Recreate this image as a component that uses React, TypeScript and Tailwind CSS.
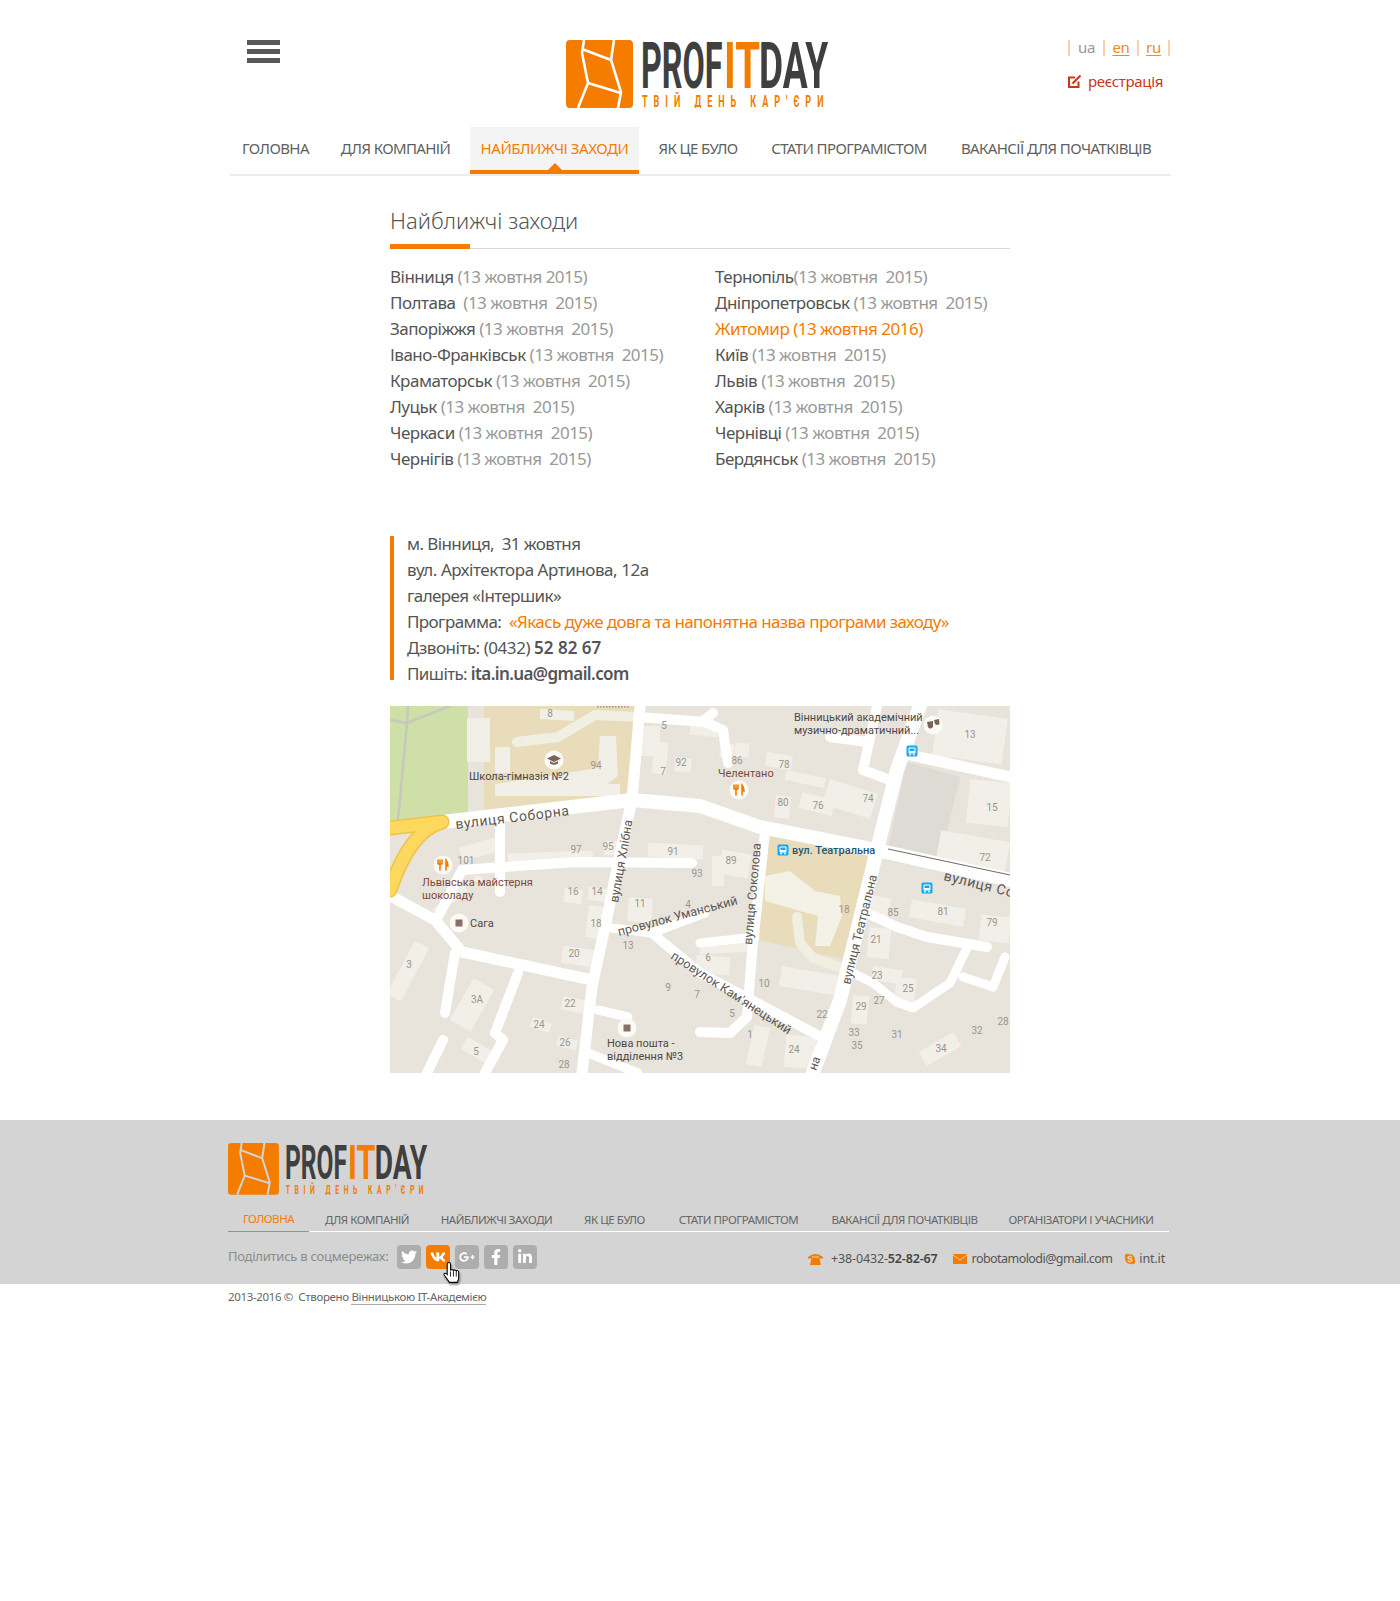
import { FaTwitter, FaVk, FaGooglePlusG, FaFacebookF, FaLinkedinIn, FaSkype } from "react-icons/fa";

const navItems = [
  { label: "ГОЛОВНА", w: "w-[91px]" },
  { label: "ДЛЯ КОМПАНІЙ", w: "w-[149px]" },
  { label: "НАЙБЛИЖЧІ ЗАХОДИ", w: "w-[169px] tracking-[-0.45px]", active: true },
  { label: "ЯК ЦЕ БУЛО", w: "w-[118px]" },
  { label: "СТАТИ ПРОГРАМІСТОМ", w: "w-[184px] tracking-[-0.3px]" },
  { label: "ВАКАНСІЇ ДЛЯ ПОЧАТКІВЦІВ", w: "w-[230px]" },
];

const footerNav = [
  { label: "ГОЛОВНА", w: "w-[81px]", active: true },
  { label: "ДЛЯ КОМПАНІЙ", w: "w-[116px]" },
  { label: "НАЙБЛИЖЧІ ЗАХОДИ", w: "w-[143px]" },
  { label: "ЯК ЦЕ БУЛО", w: "w-[93px]" },
  { label: "СТАТИ ПРОГРАМІСТОМ", w: "w-[155px]" },
  { label: "ВАКАНСІЇ ДЛЯ ПОЧАТКІВЦІВ", w: "w-[177px]" },
  { label: "ОРГАНІЗАТОРИ І УЧАСНИКИ", w: "w-[176px]" },
];

const D = "(13 жовтня\u00a0\u00a02015)";

const leftCities: [string, string][] = [
  ["Вінниця", "(13 жовтня 2015)"],
  ["Полтава", "\u00a0" + D],
  ["Запоріжжя", D],
  ["Івано-Франківськ", D],
  ["Краматорськ", D],
  ["Луцьк", D],
  ["Черкаси", D],
  ["Чернігів", D],
];

const rightCities: [string, string][] = [
  ["Тернопіль", D],
  ["Дніпропетровськ", D],
  ["Житомир", "(13 жовтня 2016)"],
  ["Київ", D],
  ["Львів", D],
  ["Харків", D],
  ["Чернівці", D],
  ["Бердянськ", D],
];

function Logo({ scale, line }: { scale: number; line: string }) {
  return (
    <svg width={265 * scale} height={68 * scale} viewBox="0 0 265 68" className="block">
      <rect x="0" y="0" width="67" height="68" rx="4" fill="#f47d00" />
      <g fill="none" stroke={line} strokeWidth="2.6">
        <path d="M18 0 L16 13 L22 43 L12 68" />
        <path d="M16 9 L45 20" />
        <path d="M48 0 L45 20 L55 52 L52 68" />
        <path d="M22 43 L55 53" />
      </g>
      <g fontFamily="Roboto, sans-serif" fontWeight="700" fontSize="64">
        <text transform="translate(75 48) scale(0.5 1)" fill="#3f3f3f" textLength="163" lengthAdjust="spacingAndGlyphs">
          PROF
        </text>
        <text transform="translate(158 48) scale(0.6 1)" fill="#f47d00" textLength="60" lengthAdjust="spacingAndGlyphs">
          IT
        </text>
        <text transform="translate(193 48) scale(0.54 1)" fill="#3f3f3f" textLength="128" lengthAdjust="spacingAndGlyphs">
          DAY
        </text>
      </g>
      <text
        transform="translate(76 67) scale(0.55 1)"
        fill="#f47d00"
        fontFamily="Roboto, sans-serif"
        fontWeight="700"
        fontSize="16.5"
        textLength="330"
        lengthAdjust="spacing"
      >
        ТВІЙ ДЕНЬ КАР'ЄРИ
      </text>
    </svg>
  );
}

function Road({ d, w = 10, c = "#ffffff" }: { d: string; w?: number; c?: string }) {
  return <path d={d} fill="none" stroke={c} strokeWidth={w + 1} strokeLinecap="round" strokeLinejoin="round" />;
}

function Poi({ x, y, kind }: { x: number; y: number; kind: "food" | "square" | "school" | "theatre" }) {
  return (
    <g transform={`translate(${x} ${y})`}>
      <circle r="9.5" fill="#fbfaf7" />
      {kind === "food" && (
        <g stroke="#f47d00" strokeWidth="1.6" fill="none" strokeLinecap="round">
          <path d="M-3 -5 V5 M-5 -5 V-1.5 Q-3 0 -1 -1.5 V-5" />
          <path d="M3 5 V-5 Q5 -3 5 1 L3 1" fill="#f47d00" />
        </g>
      )}
      {kind === "square" && <rect x="-3.5" y="-3.5" width="7" height="7" fill="#8a6f67" />}
      {kind === "school" && (
        <g fill="#7d6259">
          <path d="M-7 -1.5 L0 -5 L7 -1.5 L0 2 Z" />
          <path d="M-4 1 L0 3 L4 1 V3.5 Q0 6 -4 3.5 Z" />
        </g>
      )}
      {kind === "theatre" && (
        <g fill="#7d6259">
          <path d="M-6 -3 L0 -4 L0 2 Q-3 5 -5 2 Z" />
          <path d="M1 -5 L6 -6 L6.5 -1 Q4 1 2 -1 Z" />
        </g>
      )}
    </g>
  );
}

function BusStop({ x, y }: { x: number; y: number }) {
  return (
    <g transform={`translate(${x} ${y})`}>
      <rect x="-5.5" y="-5.5" width="11" height="11" rx="1.5" fill="#17a9ef" />
      <rect x="-3.5" y="-3.5" width="7" height="6" rx="1" fill="#fff" />
      <rect x="-2.5" y="-2.5" width="5" height="2.5" fill="#17a9ef" />
      <circle cx="-2" cy="3.5" r="0.9" fill="#fff" />
      <circle cx="2" cy="3.5" r="0.9" fill="#fff" />
    </g>
  );
}

const houseNumbers: [string, number, number][] = [
  ["8", 160, 11], ["5", 274, 23], ["92", 291, 60], ["7", 273, 69], ["94", 206, 63], ["97", 186, 147],
  ["95", 218, 144], ["91", 283, 149], ["93", 307, 171], ["101", 76, 158], ["16", 183, 189], ["14", 207, 189],
  ["11", 250, 201], ["4", 298, 202], ["18", 206, 221], ["13", 238, 243], ["20", 184, 251], ["9", 278, 285],
  ["7", 307, 292], ["3", 19, 262], ["3А", 87, 297], ["22", 180, 301], ["24", 149, 322], ["26", 175, 340],
  ["5", 86, 349], ["28", 174, 362], ["86", 347, 58], ["78", 394, 62], ["80", 393, 100], ["76", 428, 103],
  ["74", 478, 96], ["13", 580, 32], ["15", 602, 105], ["72", 595, 155], ["89", 341, 158], ["18", 454, 207],
  ["85", 503, 210], ["81", 553, 209], ["79", 602, 220], ["21", 486, 237], ["23", 487, 273], ["25", 518, 286],
  ["27", 489, 298], ["29", 471, 304], ["22", 432, 312], ["33", 464, 330], ["35", 467, 343], ["31", 507, 332],
  ["34", 551, 346], ["32", 587, 328], ["28", 613, 319], ["6", 318, 255], ["10", 374, 281], ["5", 342, 311],
  ["1", 360, 332], ["24", 404, 347],
];

const lightBlocks: [number, number, number, number, number][] = [
  [77, 12, 23, 44, 0], [105, 41, 15, 26, 0], [105, 78, 125, 12, 0], [118, 146, 85, 14, -2], [70, 136, 40, 14, -15],
  [214, 135, 20, 14, 0], [258, 138, 55, 14, 3], [174, 183, 18, 14, 8], [198, 182, 20, 13, 8], [238, 192, 24, 24, 5],
  [197, 200, 16, 32, 8], [172, 242, 32, 17, 8], [10, 235, 16, 60, 28], [70, 275, 24, 48, 30], [172, 292, 24, 14, 12],
  [141, 314, 20, 10, 20], [167, 332, 20, 10, 14], [72, 338, 32, 14, 30], [263, 36, 14, 32, 6], [285, 52, 16, 14, 6],
  [330, 38, 14, 14, 5], [345, 37, 14, 14, 5], [376, 48, 26, 14, 10], [395, 68, 40, 10, 12], [385, 90, 15, 22, 6],
  [410, 90, 34, 16, 14], [435, 80, 50, 26, 18], [545, 8, 70, 46, 8], [578, 75, 42, 44, 6], [548, 130, 70, 30, 10],
  [330, 146, 30, 24, 10], [390, 265, 60, 20, 10], [470, 190, 30, 20, 10], [520, 198, 55, 18, 10], [590, 210, 30, 26, 6],
  [478, 222, 22, 30, 5], [482, 262, 30, 14, 10], [505, 272, 20, 30, 6], [462, 290, 16, 28, 5], [530, 335, 40, 16, -30],
  [360, 320, 16, 40, 12], [395, 330, 30, 32, 5], [322, 150, 12, 30, 0], [310, 235, 50, 12, -3], [306, 250, 34, 18, 5],
  [250, 20, 20, 30, 0], [300, 20, 28, 10, 6], [150, 4, 34, 10, 3], [84, 170, 8, 6, 20], [40, 190, 40, 8, -40],
];

function MapView() {
  return (
    <svg width="620" height="367" viewBox="0 0 620 367" className="block" fontFamily="Roboto, sans-serif">
      <rect width="620" height="367" fill="#e8e4dc" />
      <path d="M0 0 H78 V112 L0 122 Z" fill="#cfdfa8" />
      <path d="M18 0 L17 17 L8 114 M0 14 L17 17 L60 0" stroke="#c8c7bd" strokeWidth="2.5" fill="none" />
      <path d="M94 0 H245 L241 92 L94 110 Z" fill="#e8dcba" />
      <path d="M370 127 L482 151 L457 254 L370 234 Z" fill="#e8dcba" />
      <path d="M517 56 L570 71 L550 154 L498 142 Z" fill="#dedad4" />
      <path d="M207 0.8 H240" stroke="#b58a7a" strokeWidth="1.4" strokeDasharray="1.5 1.5" fill="none" />
      {lightBlocks.map(([x, y, w, h, r], i) => (
        <rect key={i} x={x} y={y} width={w} height={h} fill="#f1efe8" transform={`rotate(${r} ${x + w / 2} ${y + h / 2})`} />
      ))}
      <path d="M105 80 H215 L228 70 L226 30 L210 30 L208 62 L105 78 Z" fill="#f1efe8" />
      <path d="M375 170 L400 165 L425 185 L450 190 L452 210 L440 240 L425 240 L428 210 L375 195 Z" fill="#f4f1e6" />

      {/* cream paths on the campus */}
      <Road d="M127 36 L168 31 L205 9 L248 11" w={9} c="#f1eee2" />
      <Road d="M407 211 L410 237 L423 252 L457 264" w={9} c="#f1eee2" />

      {/* streets */}
      <Road d="M248 11 L315 16 L333 24 L338 57" w={9} />
      <Road d="M52 116 L242 94 L310 100 L370 121 L487 144 L620 174" w={13} />
      <path d="M498 143 L620 169" stroke="#6e6a62" strokeWidth="1" fill="none" />
      <Road d="M250 0 L242 94 L228 157 L218 207 L202 281 L192 367" w={10} />
      <Road d="M48 211 L72 164 L185 156 L302 157" w={9} />
      <Road d="M110 117 V186" w={9} />
      <Road d="M-5 187 L45 214 L72 246 L202 274" w={10} />
      <Road d="M65 247 L55 307" w={9} />
      <Road d="M53 334 L37 367" w={9} />
      <Road d="M128 267 L105 327 L113 334 L95 367" w={9} />
      <Road d="M208 304 L238 311" w={8} />
      <Road d="M198 347 L248 367" w={8} />
      <Road d="M222 222 L262 227 L315 207" w={8} />
      <Road d="M310 237 L357 232" w={8} />
      <Road d="M262 227 L310 267 L437 334" w={9} />
      <Road d="M375 126 L362 247 L357 311 L340 327 L310 326" w={9} />
      <Road d="M530 0 L507 64 L487 144 L450 294 L423 367" w={13} />
      <Road d="M487 0 L473 64 L500 74" w={9} />
      <Road d="M440 31 L477 36" w={9} />
      <Road d="M520 49 L620 71" w={10} />
      <Road d="M477 207 L507 221 L537 231 L597 241" w={9} />
      <Road d="M577 242 L560 277 L523 302 L507 296 L483 277 L457 264" w={8} />
      <Road d="M573 271 L603 281 L615 251" w={8} />
      <Road d="M312 16 L323 7" w={9} />

      {/* yellow main road */}
      <Road d="M0 122 L52 116 M52 116 Q20 125 0 184" w={14} c="#f0c24a" />
      <Road d="M0 122 L52 116 M52 116 Q20 125 0 184" w={11} c="#fdd85f" />

      {houseNumbers.map(([t, x, y], i) => (
        <text key={i} x={x} y={y} fontSize="10" fill="#9a958c" textAnchor="middle">
          {t}
        </text>
      ))}

      <g fontSize="14" fill="#5c5853">
        <text x="66" y="123" transform="rotate(-7 66 123)" letterSpacing="0.6">вулиця Соборна</text>
        <text x="228" y="197" transform="rotate(-80 228 197)" fontSize="12.5">вулиця Хлібна</text>
        <text x="362" y="239" transform="rotate(-85 362 239)" fontSize="12.5">вулиця Соколова</text>
        <text x="460" y="279" transform="rotate(-76 460 279)" fontSize="12.5">вулиця Театральна</text>
        <text x="553" y="174" transform="rotate(14 553 174)" letterSpacing="0.6">вулиця Со</text>
        <text x="229" y="230" transform="rotate(-15 229 230)" fontSize="12.5">провулок Уманський</text>
        <text x="280" y="252" transform="rotate(33 280 252)" fontSize="12.5">провулок Кам'янецький</text>
        <text x="426" y="365" transform="rotate(-70 426 365)" fontSize="12">на</text>
      </g>

      <Poi x={164} y={54} kind="school" />
      <Poi x={53} y={159} kind="food" />
      <Poi x={69} y={217} kind="square" />
      <Poi x={237} y={322} kind="square" />
      <Poi x={349} y={84} kind="food" />
      <Poi x={543} y={19} kind="theatre" />
      <BusStop x={522} y={45} />
      <BusStop x={537} y={182} />
      <BusStop x={393} y={144} />

      <g fontSize="11" fill="#4b4844">
        <text x="79" y="74">Школа-гімназія №2</text>
        <text x="80" y="221">Сага</text>
        <text x="217" y="341">Нова пошта -</text>
        <text x="217" y="354">відділення №3</text>
        <text x="404" y="15">Вінницький академічний</text>
        <text x="404" y="28">музично-драматичний...</text>
      </g>
      <g fontSize="11" fill="#7c4a3a">
        <text x="32" y="180">Львівська майстерня</text>
        <text x="32" y="193">шоколаду</text>
        <text x="328" y="71">Челентано</text>
      </g>
      <text x="402" y="148" fontSize="11" fontWeight="500" fill="#1d5a7a">вул. Театральна</text>
    </svg>
  );
}

const socials = [
  { Icon: FaTwitter, active: false },
  { Icon: FaVk, active: true },
  { Icon: FaGooglePlusG, active: false },
  { Icon: FaFacebookF, active: false },
  { Icon: FaLinkedinIn, active: false },
];

function CityList({ items }: { items: [string, string][] }) {
  return (
    <ul className="flex flex-col">
      {items.map(([city, date]) => {
        const hot = city === "Житомир";
        return (
          <li key={city} className={`h-[26px] leading-[26px] whitespace-nowrap ${hot ? "text-[#f47d00]" : "text-[#555555]"}`}>
            {city}
            {city !== "Тернопіль" && " "}
            <span className={hot ? "" : "text-[#999999]"}>{date}</span>
          </li>
        );
      })}
    </ul>
  );
}

export default function App() {
  return (
    <div className="relative min-h-[1601px] w-[1400px] bg-white font-['Noto_Sans',sans-serif] text-[#555555]">
      <header className="ml-[230px] w-[941px]">
        <div className="flex h-[127px] items-start pt-[40px]">
          <div className="w-[336px] pl-[17px]">
            <div className="flex w-[33px] flex-col gap-[4px]">
              <span className="h-[5px] bg-[#595959]" />
              <span className="h-[5px] bg-[#595959]" />
              <span className="h-[5px] bg-[#595959]" />
            </div>
          </div>
          <Logo scale={1} line="#ffffff" />
          <div className="ml-[237px] flex flex-col">
            <div className="flex h-[16px] items-center text-[15px] leading-[13px] tracking-[-0.3px]">
              <span className="h-[16px] w-[2px] bg-[#f9cfb0]" />
              <span className="w-[33px] pb-[2px] text-center text-[#999999]">ua</span>
              <span className="h-[16px] w-[2px] bg-[#f9cfb0]" />
              <span className="w-[32px] pb-[2px] text-center text-[#f08a24] underline underline-offset-2">en</span>
              <span className="h-[16px] w-[2px] bg-[#f9cfb0]" />
              <span className="w-[29px] pb-[2px] text-center text-[#f08a24] underline underline-offset-2">ru</span>
              <span className="h-[16px] w-[2px] bg-[#f9cfb0]" />
            </div>
            <div className="mt-[16px] flex items-center gap-[6px] text-[#c9381a]">
              <svg width="14" height="14" viewBox="0 0 14 14" fill="none">
                <path d="M7 3.5 H1 V13 H10.5 V7.5" stroke="#c9381a" strokeWidth="2" />
                <path d="M4.5 9.5 L12.5 1.5" stroke="#c9381a" strokeWidth="2.2" />
              </svg>
              <span className="text-[15px] leading-[18px] tracking-[-0.3px]">реєстрація</span>
            </div>
          </div>
        </div>
        <nav className="flex h-[49px] border-b-2 border-[#ececec]">
          {navItems.map((item) => (
            <div
              key={item.label}
              className={`relative flex h-[47px] items-center justify-center whitespace-nowrap text-[15px] tracking-[-0.6px] ${item.w} ${
                item.active ? "border-b-4 border-[#f47d00] bg-[#f4f4f4] pb-[1px] text-[#f47d00]" : "pb-[5px] text-[#5f5f5f]"
              }`}
            >
              {item.label}
              {item.active && (
                <span className="absolute bottom-0 left-1/2 h-0 w-0 -translate-x-1/2 border-x-[7px] border-b-[7px] border-x-transparent border-b-[#f47d00]" />
              )}
            </div>
          ))}
        </nav>
      </header>

      <main className="ml-[390px] w-[620px]">
        <h1 className="mt-[29px] h-[39px] text-[22px] leading-[30px] font-light tracking-[0px] text-[#555555]">Найближчі заходи</h1>
        <div className="flex h-[5px] items-end">
          <span className="h-[5px] w-[80px] bg-[#f47d00]" />
          <span className="h-px flex-1 bg-[#d9d9d9]" />
        </div>
        <div className="mt-[15px] flex text-[17px] tracking-[-0.5px]">
          <div className="w-[325px]">
            <CityList items={leftCities} />
          </div>
          <CityList items={rightCities} />
        </div>
        <div className="mt-[64px] flex h-[144px] flex-col border-l-4 border-[#f47d00] pl-[13px] text-[17px] tracking-[-0.6px]">
          <p className="h-[26px] shrink-0 leading-[16px]">м. Вінниця,&nbsp; 31 жовтня</p>
          <p className="h-[26px] shrink-0 leading-[16px] tracking-[-0.45px]">вул. Архітектора Артинова, 12а</p>
          <p className="h-[26px] shrink-0 leading-[16px]">галерея «Інтершик»</p>
          <p className="h-[26px] shrink-0 leading-[16px]">
            Программа:&nbsp; <span className="text-[#f47d00]">«Якась дуже довга та напонятна назва програми заходу»</span>
          </p>
          <p className="h-[26px] shrink-0 leading-[16px] tracking-[-0.45px]">
            Дзвоніть: (0432) <b className="font-semibold tracking-[0px]">52 82 67</b>
          </p>
          <p className="h-[26px] shrink-0 whitespace-nowrap leading-[16px]">
            Пишіть: <b className="font-semibold">ita.in.ua@gmail.com</b>
          </p>
        </div>
        <div className="mt-[26px]">
          <MapView />
        </div>
      </main>

      <footer className="mt-[47px]">
        <div className="h-[164px] bg-[#d4d4d4]">
          <div className="ml-[228px] w-[941px] pt-[23px]">
            <Logo scale={0.76} line="#d4d4d4" />
            <div className="mt-[14px] flex h-[23px] border-b border-white">
              {footerNav.map((item) => (
                <div
                  key={item.label}
                  className={`flex h-[23px] items-center justify-center whitespace-nowrap pb-[2px] text-[11.5px] tracking-[-0.45px] ${item.w} ${
                    item.active ? "border-b border-[#f47d00] text-[#f47d00]" : "text-[#666666]"
                  }`}
                >
                  {item.label}
                </div>
              ))}
            </div>
            <div className="mt-[13px] flex items-center">
              <span className="w-[169px] whitespace-nowrap text-[13px] tracking-[-0.25px] text-[#8c8c8c]">Поділитись в соцмережах:</span>
              <div className="relative flex gap-[5px]">
                {socials.map(({ Icon, active }, i) => (
                  <span
                    key={i}
                    className={`flex h-[24px] w-[24px] items-center justify-center rounded-[4px] text-[16px] text-white ${
                      active ? "bg-[#f47d00]" : "bg-[#adadad]"
                    }`}
                  >
                    <Icon />
                  </span>
                ))}
                <svg width="20" height="25" viewBox="0 0 18 24" className="absolute left-[45px] top-[16px] drop-shadow-[1px_2px_1px_rgba(0,0,0,0.4)]">
                  <path
                    d="M6 1.5 c1 0 1.6.8 1.6 1.8 V9 c.3-.9 2.4-1 2.8.2 c.4-1 2.4-.9 2.7.4 c.5-.8 2.2-.5 2.3 1 V16 c0 2-.8 3-1.5 4.5 H6.5 L1.5 13.5 c-.8-1.2.8-2.5 2-1.3 L4.4 13 V3.3 c0-1 .6-1.8 1.6-1.8 z"
                    fill="#ffffff"
                    stroke="#000000"
                    strokeWidth="1"
                  />
                  <path d="M7.6 10 V15 M10.4 10 V15 M13.1 10 V15" stroke="#000000" strokeWidth="0.8" fill="none" />
                </svg>
              </div>
              <div className="ml-auto mt-[5px] flex items-center pr-[4px] text-[12.5px] tracking-[-0.15px] text-[#555555]">
                <svg width="15" height="12" viewBox="0 0 15 12" className="mr-[8px]">
                  <path d="M0 4 Q7.5 -2 15 4 V5.5 H11 V3.5 H4 V5.5 H0 Z M3.5 5.5 L4.5 4.5 H10.5 L11.5 5.5 L13 12 H2 Z" fill="#f47d00" />
                </svg>
                <span>
                  +38-0432-<b className="font-semibold text-[#444444]">52-82-67</b>
                </span>
                <svg width="14" height="10" viewBox="0 0 14 10" className="ml-[15px] mr-[5px]">
                  <rect width="14" height="10" fill="#f47d00" />
                  <path d="M0 1 L7 6 L14 1" stroke="#d4d4d4" fill="none" />
                </svg>
                <span className="tracking-[-0.55px]">robotamolodi@gmail.com</span>
                <FaSkype className="ml-[12px] mr-[3px] text-[12px] text-[#f47d00]" />
                <span>int.it</span>
              </div>
            </div>
          </div>
        </div>
        <div className="ml-[228px] mt-[5px] text-[11.5px] leading-[16px] tracking-[-0.35px] text-[#666666]">
          2013-2016 ©&nbsp; Створено <span className="border-b border-[#aaaaaa]">Вінницькою IT-Академією</span>
        </div>
      </footer>
    </div>
  );
}
